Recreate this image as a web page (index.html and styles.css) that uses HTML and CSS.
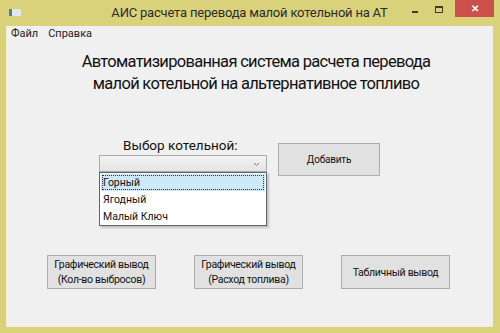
FILE: index.html
```html
<!DOCTYPE html>
<html lang="ru">
<head>
<meta charset="UTF-8">
<title>АИС расчета перевода малой котельной на АТ</title>
<link rel="stylesheet" href="styles.css">
</head>
<body>
<div class="window">
  <div class="titlebar">
    <span class="app-icon"></span>
    <span class="title">АИС расчета перевода малой котельной на АТ</span>
    <div class="controls">
      <span class="ctl min"><i></i></span>
      <span class="ctl max"><i></i></span>
      <span class="ctl close">&#x2715;</span>
    </div>
  </div>
  <div class="client">
    <div class="menu">
      <span>Файл</span>
      <span>Справка</span>
    </div>
    <h1 class="heading">Автоматизированная система расчета перевода<br>малой котельной на альтернативное топливо</h1>
    <div class="picker">
      <div class="picker-left">
        <div class="label">Выбор котельной:</div>
        <div class="combo">
          <svg class="arrow" width="7" height="5" viewBox="0 0 7 5"><path d="M1 1 L3.5 3.5 L6 1" fill="none" stroke="#7a7a7a" stroke-width="1"/></svg>
          <ul class="dropdown">
            <li class="selected">Горный</li>
            <li>Ягодный</li>
            <li>Малый Ключ</li>
          </ul>
        </div>
      </div>
      <button class="btn add">Добавить</button>
    </div>
    <div class="actions">
      <button class="btn out">Графический вывод<br>(Кол-во выбросов)</button>
      <button class="btn out">Графический вывод<br>(Расход топлива)</button>
      <button class="btn out">Табличный вывод</button>
    </div>
  </div>
</div>
</body>
</html>
```

FILE: styles.css
```css
body {
  margin: 0;
  font-family: Roboto, "Noto Sans", sans-serif;
}
.window {
  width: 500px;
  height: 333px;
  background-color: #d9d27b;
  box-sizing: border-box;
  padding: 0 7px 6px 6px;
  display: flex;
  flex-direction: column;
}
.titlebar {
  height: 26px;
  display: flex;
  align-items: flex-start;
  position: relative;
}
.app-icon {
  width: 9px;
  height: 7px;
  margin: 9px 0 0 3px;
  background-color: #dfe8ee;
  border-left: 3px solid #5d7a8e;
}
.title {
  position: absolute;
  left: 0;
  right: 0;
  top: 5px;
  text-align: center;
  font-size: 13px;
  letter-spacing: -0.2px;
  color: #2b2b2b;
  pointer-events: none;
}
.controls {
  margin-left: auto;
  margin-right: -1px;
  display: flex;
}
.ctl {
  height: 17px;
  width: 24px;
  display: flex;
  justify-content: center;
}
.min i {
  width: 6px;
  height: 2px;
  margin-top: 11px;
  background-color: #3b3b30;
}
.max i {
  width: 6px;
  height: 4px;
  margin-top: 6px;
  border: 1px solid #3b3b30;
  border-top-width: 2px;
}
.close {
  width: 39px;
  margin-left: 4px;
  background-color: #c9504b;
  color: #fff;
  font-size: 10px;
  line-height: 17px;
  font-weight: bold;
}
.client {
  flex: 1;
  background-color: #f0f0f0;
  border-left: 1px solid #f6f2c8;
  border-bottom: 1px solid #f6f2c8;
}
.menu {
  display: flex;
  gap: 10px;
  padding: 1px 0 0 4px;
  height: 18px;
  font-size: 11px;
  color: #222;
}
.heading {
  margin: 6px 0 0;
  text-align: center;
  font-weight: normal;
  font-size: 16.5px;
  letter-spacing: -0.7px;
  line-height: 22px;
  color: #111;
  padding-left: 12px;
}
.picker {
  display: flex;
  align-items: flex-start;
  margin-top: 41px;
  padding-left: 92px;
}
.picker-left {
  width: 168px;
}
.label {
  font-size: 13.5px;
  line-height: 18px;
  padding-left: 24px;
  color: #111;
}
.combo {
  position: relative;
  height: 15px;
  margin-top: 1px;
  border: 1px solid #acacac;
  background: linear-gradient(#f2f2f2, #e4e4e4);
}
.arrow {
  position: absolute;
  right: 6px;
  top: 6px;
}
.dropdown {
  position: absolute;
  left: -1px;
  top: 16px;
  width: 166px;
  margin: 0;
  padding: 0;
  list-style: none;
  background-color: #fff;
  border: 1px solid #646464;
  box-shadow: 2px 2px 2px rgba(0, 0, 0, 0.2);
  font-size: 10.5px;
  color: #111;
}
.dropdown li {
  height: 17px;
  line-height: 17px;
  padding-left: 3px;
}
.dropdown li.selected {
  background-color: #cde8f6;
  outline: 1px dotted #333;
  outline-offset: -2px;
  margin: 1px 1px 0;
  padding-left: 2px;
}
.btn {
  font-family: inherit;
  background-color: #e1e1e1;
  border: 1px solid #adadad;
  color: #111;
  font-size: 10.5px;
  letter-spacing: -0.3px;
  padding: 0;
  white-space: nowrap;
}
.add {
  width: 102px;
  height: 33px;
  margin-left: 11px;
  margin-top: 7px;
  font-size: 10px;
  letter-spacing: -0.2px;
}
.actions {
  display: flex;
  gap: 38px;
  margin-top: 79px;
  padding-left: 40px;
}
.out {
  width: 109px;
  height: 34px;
  line-height: 15px;
}
```
